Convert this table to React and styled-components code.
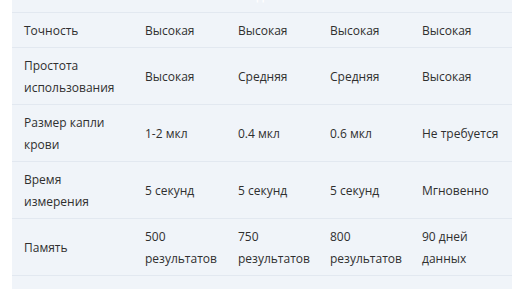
import React from "react";
import styled, { createGlobalStyle } from "styled-components";

const Global = createGlobalStyle`
  html, body { margin: 0; padding: 0; background: #ffffff; overflow: hidden; }
  body { font-family: "Open Sans", "Noto Sans", sans-serif; }
`;

const Page = styled.div`
  width: 516px;
  height: 289px;
  overflow: hidden;
  padding: 0 4px 0 12px;
  box-sizing: border-box;
`;

const Table = styled.table`
  width: 500px;
  margin-top: -22px;
  border-collapse: collapse;
  table-layout: fixed;
  background: #f0f4f9;
  font-size: 12px;
  line-height: 22px;
  color: #2f2f2f;
`;

const Col = styled.col`
  width: ${(p) => p.$w}px;
`;

const HeadCell = styled.th`
  padding: 7px 12px 5px;
  text-align: left;
  font-weight: 600;
  color: #ffffff;
  border-bottom: 1px solid #e2e8f0;
  white-space: nowrap;
`;

const Row = styled.tr`
  border-bottom: 1px solid #e2e8f0;
`;

const Cell = styled.td`
  padding: 7px 12px 5px;
  vertical-align: middle;
  text-align: left;
`;

const header = ["", "", "Модель", "", ""];

const rows = [
  ["Точность", "Высокая", "Высокая", "Высокая", "Высокая"],
  ["Простота использования", "Высокая", "Средняя", "Средняя", "Высокая"],
  ["Размер капли крови", "1-2 мкл", "0.4 мкл", "0.6 мкл", "Не требуется"],
  ["Время измерения", "5 секунд", "5 секунд", "5 секунд", "Мгновенно"],
  ["Память", "500 результатов", "750 результатов", "800 результатов", "90 дней данных"],
];

const widths = [121, 93, 92, 92, 102];

export default function App() {
  return (
    <Page>
      <Global />
      <Table>
        <colgroup>
          {widths.map((w, i) => (
            <Col key={i} $w={w} />
          ))}
        </colgroup>
        <thead>
          <tr>
            {header.map((h, i) => (
              <HeadCell key={i}>{h}</HeadCell>
            ))}
          </tr>
        </thead>
        <tbody>
          {rows.map((r, i) => (
            <Row key={i}>
              {r.map((c, j) => (
                <Cell key={j}>{c}</Cell>
              ))}
            </Row>
          ))}
          <Row>
            <Cell colSpan={5}>&nbsp;</Cell>
          </Row>
        </tbody>
      </Table>
    </Page>
  );
}
